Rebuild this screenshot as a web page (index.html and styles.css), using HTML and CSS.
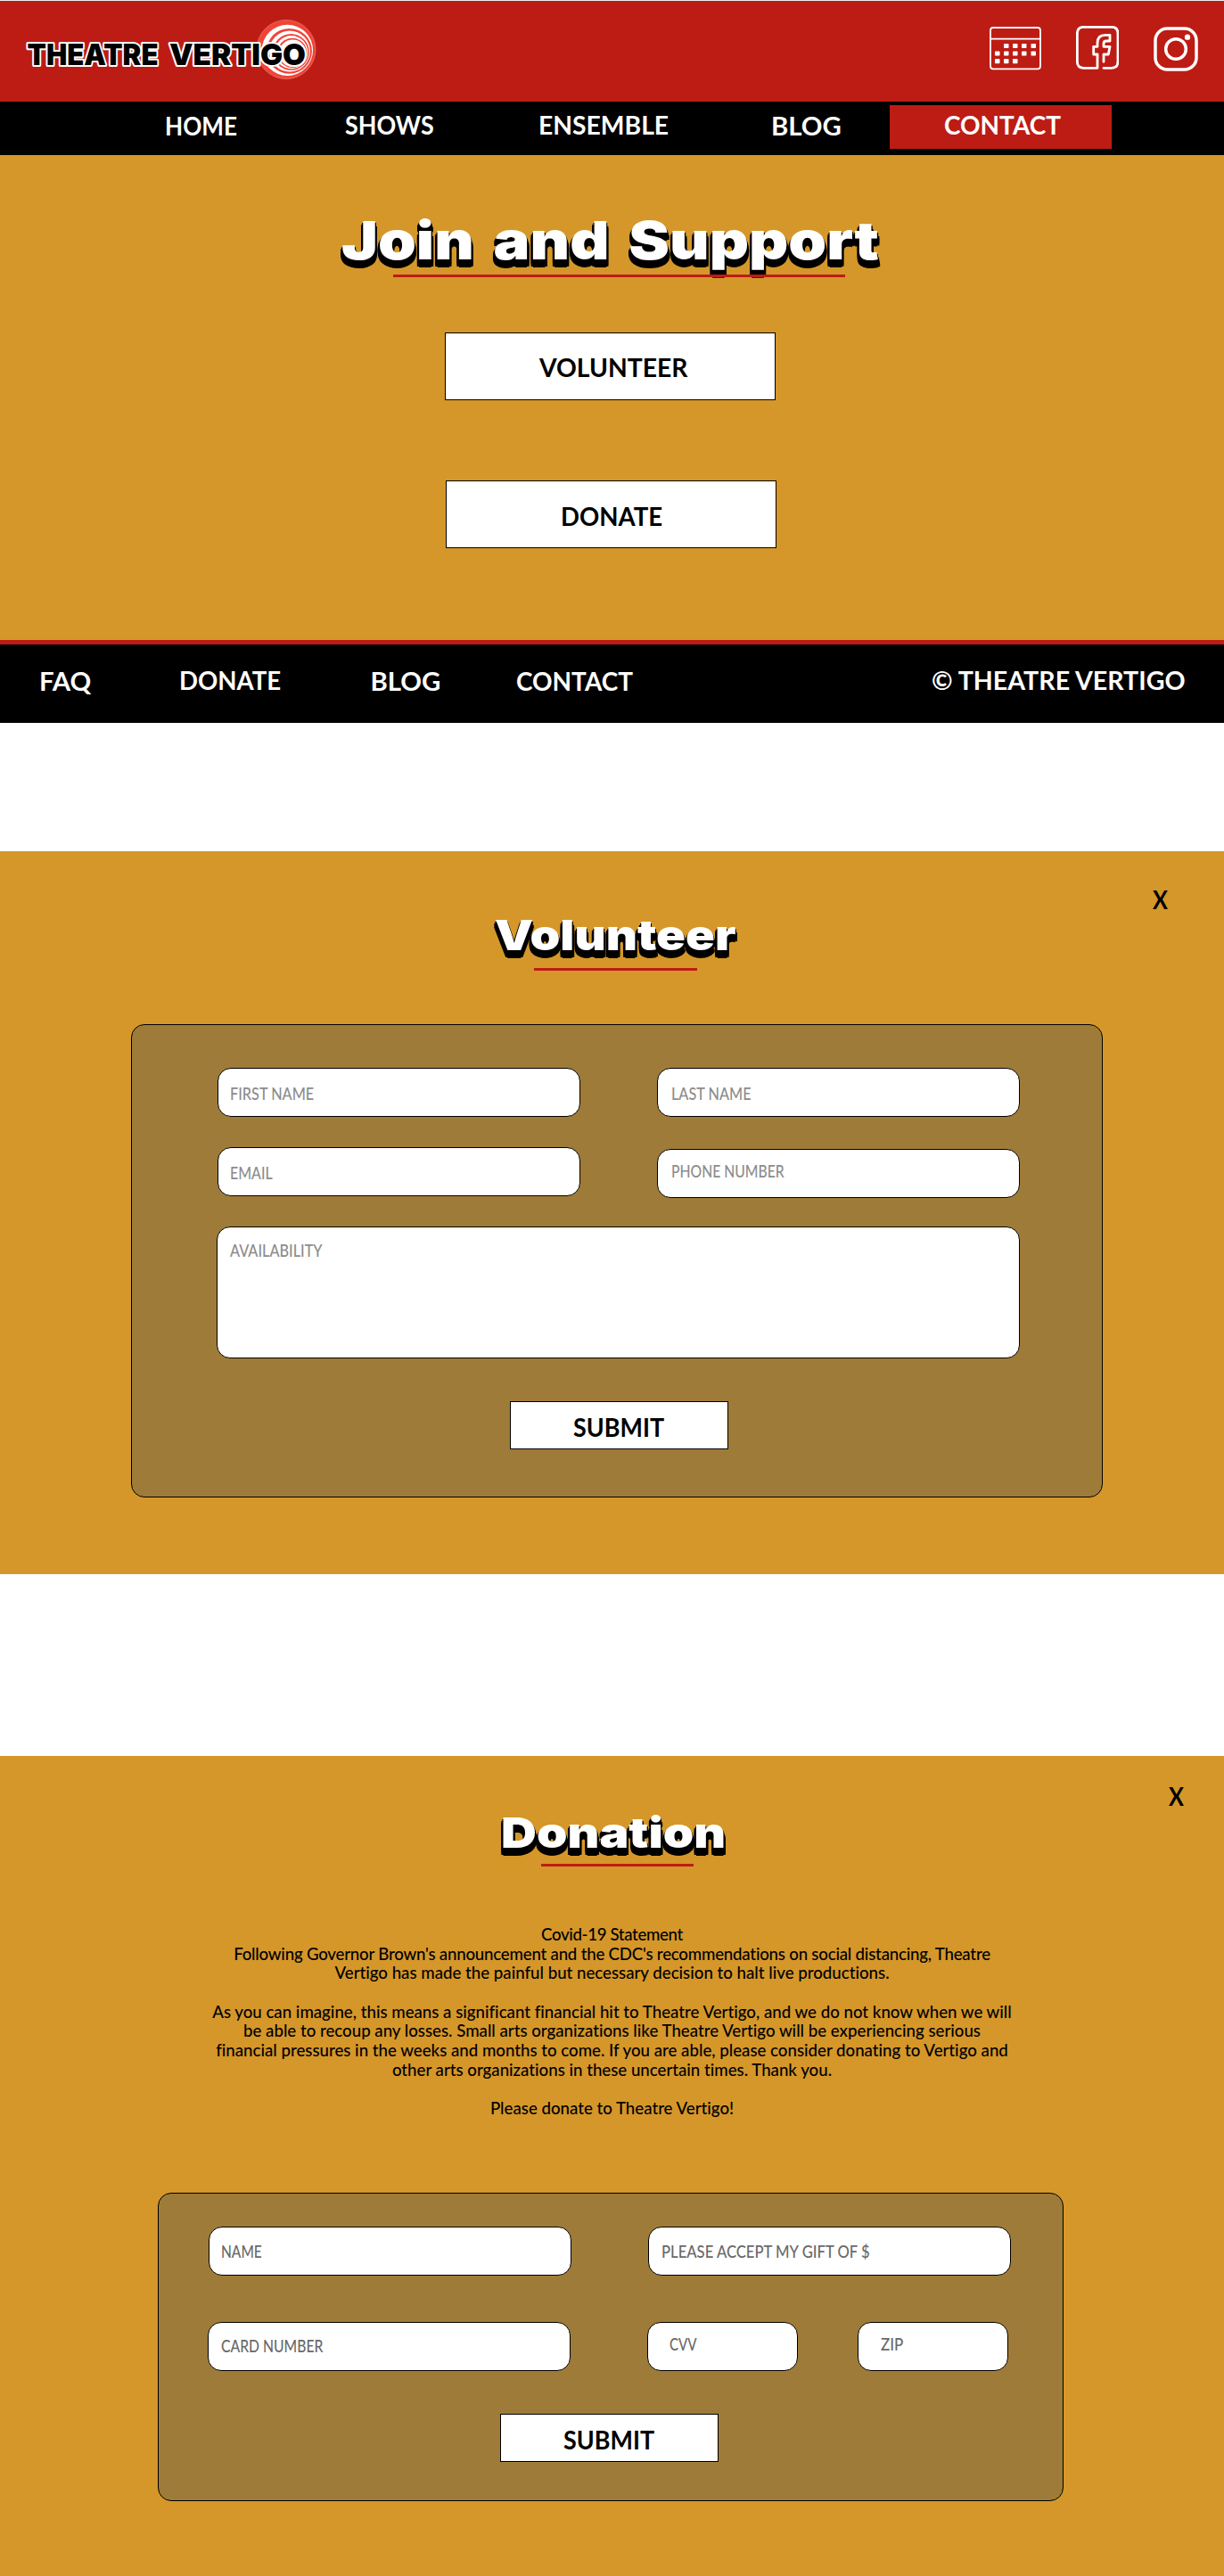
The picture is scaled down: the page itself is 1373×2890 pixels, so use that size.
FILE: index.html
```html
<!DOCTYPE html>
<html lang="en">
<head>
<meta charset="utf-8">
<title>Theatre Vertigo - Contact</title>
<link rel="stylesheet" href="styles.css">
</head>
<body>
<div class="screen screen-main">
  <header class="masthead">
    <svg class="logo" width="330" height="76" viewBox="28 18 330 76">
      <circle cx="321" cy="55.5" r="33" fill="#f04438" stroke="#e2685c" stroke-width="1"/>
      <g fill="#fff">
        <circle cx="322.4" cy="56.3" r="28.6"/>
        <circle cx="324.5" cy="57.3" r="25.4" fill="#f04438"/>
        <circle cx="325" cy="57.5" r="22.9"/>
        <circle cx="326.4" cy="58.4" r="20.4" fill="#f04438"/>
        <circle cx="326.8" cy="58.6" r="18.6"/>
        <circle cx="327.8" cy="59.3" r="16.6" fill="#f04438"/>
        <circle cx="328.2" cy="59.7" r="15.2"/>
      </g>
      <g class="logo-text">
        <text x="30.500" y="73" textLength="147" lengthAdjust="spacingAndGlyphs">THEATRE</text>
        <text x="190" y="73" textLength="153" lengthAdjust="spacingAndGlyphs">VERTIGO</text>
      </g>
    </svg>
    <div class="social">
      <svg width="58" height="49" viewBox="1110 30 58 49">
        <g fill="none" stroke="#fff" stroke-width="1.8">
          <rect x="1111" y="31" width="56" height="46.300" rx="3"/>
          <path d="M1111 43.700H1167"/>
        </g>
        <g fill="#fff">
          <rect x="1126" y="49" width="5.500" height="5" rx=".8"/><rect x="1136" y="49" width="5.500" height="5" rx=".8"/><rect x="1146" y="49" width="5.500" height="5" rx=".8"/><rect x="1156.500" y="49" width="5.500" height="5" rx=".8"/>
          <rect x="1116" y="57.500" width="5.500" height="5" rx=".8"/><rect x="1126" y="57.500" width="5.500" height="5" rx=".8"/><rect x="1136" y="57.500" width="5.500" height="5" rx=".8"/><rect x="1146" y="57.500" width="5.500" height="5" rx=".8"/><rect x="1156.500" y="57.500" width="5.500" height="5" rx=".8"/>
          <rect x="1116" y="66" width="5.500" height="5.300" rx=".8"/><rect x="1126" y="66" width="5.500" height="5.300" rx=".8"/><rect x="1136" y="66" width="5.500" height="5.300" rx=".8"/>
        </g>
      </svg>
      <svg class="facebook" width="48.700" height="49.300" viewBox="680 87 146 148">
        <path fill="none" stroke="#fff" stroke-width="8.500" stroke-linejoin="round" stroke-linecap="round" d="M773 208V183H789L794 157H773V147Q773 138 782 138H794V118H778Q752 118 752 145V157H739V183H752V229H706Q684 229 684 207V113Q684 91 706 91H799Q821 91 821 113V207Q821 229 799 229H773"/>
      </svg>
      <svg class="instagram" width="50" height="50" viewBox="0 0 150 150">
        <g fill="none" stroke="#fff" stroke-width="10.500">
          <rect x="6" y="6" width="138" height="138" rx="40"/>
          <circle cx="75" cy="75" r="34"/>
        </g>
        <circle cx="114" cy="35" r="9.500" fill="#fff"/>
      </svg>
    </div>
  </header>
  <nav class="nav caps">
    <a class="low"><span class="k89">HOME</span></a>
    <a><span class="k92">SHOWS</span></a>
    <a><span class="k97">ENSEMBLE</span></a>
    <a class="low"><span>BLOG</span></a>
    <a class="active"><span class="k95">CONTACT</span></a>
  </nav>
  <main class="join">
    <h1 class="title title-join">Join and Support</h1>
    <div class="rule rule-join"></div>
    <a class="button button-volunteer caps"><span class="k97">VOLUNTEER</span></a>
    <a class="button button-donate caps"><span class="k94">DONATE</span></a>
  </main>
  <footer class="footer caps">
    <a class="low"><span>FAQ</span></a>
    <a><span class="k94">DONATE</span></a>
    <a class="low"><span>BLOG</span></a>
    <a class="low"><span class="k95">CONTACT</span></a>
    <a><span class="k975">© THEATRE VERTIGO</span></a>
  </footer>
</div>

<section class="screen screen-volunteer">
  <a class="close caps"><span class="k85">X</span></a>
  <h2 class="title title-volunteer">Volunteer</h2>
  <div class="rule rule-volunteer"></div>
  <form class="panel panel-volunteer">
    <label class="field first"><span class="k87">FIRST NAME</span></label>
    <label class="field last"><span class="k87">LAST NAME</span></label>
    <label class="field email"><span class="k855">EMAIL</span></label>
    <label class="field phone"><span class="k84">PHONE NUMBER</span></label>
    <label class="field availability"><span class="k87">AVAILABILITY</span></label>
    <a class="submit caps"><span class="k92">SUBMIT</span></a>
  </form>
</section>

<section class="screen screen-donation">
  <a class="close caps"><span class="k85">X</span></a>
  <h2 class="title title-donation">Donation</h2>
  <div class="rule rule-donation"></div>
  <p class="statement"><b class="tight">Covid-19 Statement</b><br>
    <b class="snug">Following Governor Brown's announcement and the CDC's recommendations on social distancing, Theatre</b><br>
    Vertigo has made the painful but necessary decision to halt live productions.<br><br>
    As you can imagine, this means a significant financial hit to Theatre Vertigo, and we do not know when we will<br>
    be able to recoup any losses. Small arts organizations like Theatre Vertigo will be experiencing serious<br>
    financial pressures in the weeks and months to come. If you are able, please consider donating to Vertigo and<br>
    other arts organizations in these uncertain times. Thank you.<br><br>
    Please donate to Theatre Vertigo!</p>
  <form class="panel panel-donation">
    <div class="row row-first">
      <label class="field name"><span class="k83">NAME</span></label>
      <label class="field gift"><span class="k89">PLEASE ACCEPT MY GIFT OF $</span></label>
    </div>
    <div class="row row-second">
      <label class="field card"><span class="k84">CARD NUMBER</span></label>
      <label class="field cvv"><span class="k81">CVV</span></label>
      <label class="field zip"><span class="k91">ZIP</span></label>
    </div>
    <a class="submit caps"><span class="k92">SUBMIT</span></a>
  </form>
</section>
</body>
</html>
```
FILE: styles.css
```css
* { box-sizing: border-box; }

body {
  margin: 0;
  background: #fff;
  font-family: Lato, "Open Sans", sans-serif;
  color: #000;
}

.screen { overflow: hidden; }
.screen-main { height: 811px; border-top: 1px solid #f0f0f0; }
.screen-volunteer { margin-top: 144px; height: 811px; padding-top: 41.6px; background: #d59729; }
.screen-donation { margin-top: 204px; height: 920px; padding-top: 32.6px; background: #d59729; }

.caps { font-size: 29.33px; font-weight: 700; white-space: nowrap; }

/* Horizontal narrowing of capital labels */
span { display: inline-block; transform-origin: 0 50%; white-space: nowrap; }
.k81 { transform: scaleX(.81); }
.k83 { transform: scaleX(.83); }
.k84 { transform: scaleX(.842); }
.k85 { transform: scaleX(.86); }
.k855 { transform: scaleX(.855); }
.k87 { transform: scaleX(.871); }
.k89 { transform: scaleX(.892); }
.k91 { transform: scaleX(.91); }
.k92 { transform: scaleX(.918); }
.k94 { transform: scaleX(.941); }
.k95 { transform: scaleX(.952); }
.k97 { transform: scaleX(.964); }
.k975 { transform: scaleX(.975); }

/* Masthead */
.masthead {
  display: flex;
  justify-content: space-between;
  height: 113px;
  padding: 17px 29px 0 28px;
  background: #bd1c14;
}
.logo-text {
  font: 900 33px Inter, Lato, sans-serif;
  fill: #000;
  stroke: #fff;
  stroke-width: 4px;
  stroke-linejoin: round;
  paint-order: stroke;
}
.social { display: flex; align-items: flex-start; padding-top: 12px; }
.facebook { margin: -1px 0 0 38.7px; }
.instagram { margin-left: 38.6px; }

.nav {
  display: grid;
  grid-template-columns: 201.5px 217.5px 261px 133px 249px;
  align-items: start;
  height: 60px;
  padding-left: 185px;
  background: #000;
  color: #fff;
  line-height: 52px;
}
.nav .low { line-height: 54px; }
.nav .active {
  height: 49px;
  margin-top: 4px;
  padding-left: 61px;
  background: #bd1c14;
  line-height: 44px;
}

/* Join and support */
.join { height: 544px; padding-top: 65.5px; background: #d59729; }
.title {
  width: max-content;
  margin: 0;
  font-family: Inter, Lato, sans-serif;
  font-weight: 900;
  color: #fff;
  transform-origin: 0 50%;
  text-shadow:
    -1px 2px 0 #000, 1px 2px 0 #000,
    -2px 4px 0 #000, 1px 4px 0 #000,
    -2px 6px 0 #000, 2px 6px 0 #000,
    -2px 8px 0 #000, 2px 8px 0 #000,
    0 9px 0 #000;
}
.title-join {
  margin-left: 383px;
  font-size: 59px;
  line-height: 60px;
  word-spacing: 7px;
  transform: scaleX(1.164);
}
.title-volunteer, .title-donation { font-size: 47px; line-height: 48px; }
.title-volunteer { margin: 4.3px 0 0 555px; transform: scaleX(1.155); }
.title-donation { margin: 5.3px 0 0 562px; transform: scaleX(1.176); }

/* Painted above the descenders of the heading */
.rule { position: relative; height: 3px; background: #bd1c14; }
.rule-join { width: 507px; margin: 8.5px 0 0 441px; }
.rule-volunteer { width: 183px; margin: 13.1px 0 0 599px; }
.rule-donation { width: 171px; margin: 11.1px 0 0 607px; }

.button {
  display: block;
  width: 371px;
  height: 76px;
  border: 1px solid #000;
  background: #fff;
}
.button-volunteer { margin: 62px 0 0 499px; padding-left: 105px; line-height: 75px; }
.button-donate { margin: 90px 0 0 500px; padding-left: 127.5px; line-height: 77px; }

.footer {
  display: grid;
  grid-template-columns: 156.5px 215px 163.5px 466px auto;
  height: 93px;
  padding-left: 44px;
  border-top: 5px solid #bd1c14;
  background: #000;
  color: #fff;
  line-height: 79px;
}
.footer .low { line-height: 81px; }

/* Dialog screens */
.close { display: block; margin-left: 1293px; height: 24px; line-height: 24px; }
.screen-donation .close { margin-left: 1311px; }

.panel {
  border: 1px solid #000;
  border-radius: 15px;
  background: #9e7b38;
}
.field {
  display: block;
  height: 55px;
  border: 1px solid #000;
  border-radius: 15px;
  background: #fff;
  color: #8c8c8c;
  font-size: 18.67px;
  font-weight: 500;
}
.submit {
  display: block;
  width: 245px;
  height: 54px;
  padding-left: 70px;
  border: 1px solid #000;
  background: #fff;
  line-height: 55px;
}

.panel-volunteer {
  display: grid;
  grid-template-columns: 407px 407px;
  grid-template-rows: 55px 55px 148px 54px;
  column-gap: 86px;
  row-gap: 34px;
  width: 1090px;
  height: 531px;
  margin: 60px 0 0 147px;
  padding: 48px 0 0 96px;
}
.first, .last { padding-left: 13px; line-height: 56px; }
.last { padding-left: 14.5px; }
.email { padding-left: 13px; line-height: 56px; }
.phone { margin-top: 2px; padding-left: 15px; line-height: 49px; }
.availability {
  grid-column: 1 / 3;
  height: 148px;
  margin-left: -1px;
  padding-left: 14px;
  line-height: 52px;
}
.panel-volunteer .submit { grid-column: 1 / 3; margin: 14px 0 0 328px; }

.statement {
  margin: 66px 0 0;
  font-size: 18.67px;
  font-weight: 500;
  font-variant-ligatures: none;
  line-height: 21.67px;
  text-align: center;
  white-space: nowrap;
}
.statement b { font-weight: 500; }
.tight { letter-spacing: -.35px; }
.snug { letter-spacing: -.21px; }

.panel-donation {
  width: 1016px;
  height: 346px;
  margin: 83.3px 0 0 177px;
  padding-top: 37px;
}
.panel-donation .field { color: #696969; }
.row { display: flex; }
.row-first { gap: 86px; padding-left: 56px; line-height: 54px; }
.row-second { margin-top: 52px; padding-left: 55px; line-height: 52px; }
.name, .card, .gift { width: 407px; padding-left: 12.5px; }
.gift { padding-left: 14px; }
.card { padding-left: 13.5px; }
.cvv, .zip { width: 169px; line-height: 48px; }
.cvv { margin-left: 86px; padding-left: 24px; }
.zip { margin-left: 67px; padding-left: 25px; }
.panel-donation .submit { margin: 48px 0 0 383px; }
```
